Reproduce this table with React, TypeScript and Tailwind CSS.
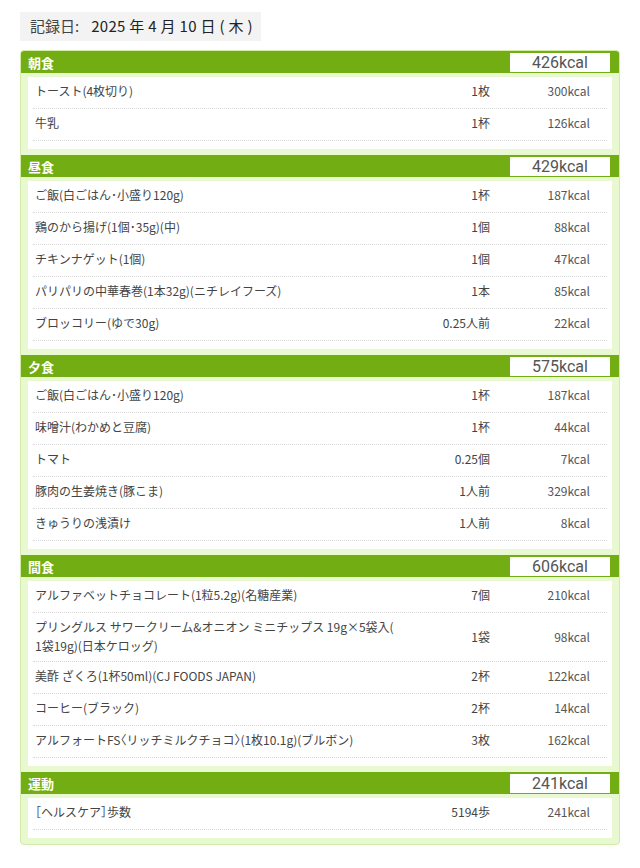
import React from 'react';

interface Item {
  name: string;
  qty: string;
  kcal: string;
}

interface Meal {
  title: string;
  total: string;
  items: Item[];
}

const meals: Meal[] = [
  {
    title: '朝食',
    total: '426kcal',
    items: [
      { name: 'トースト(4枚切り)', qty: '1枚', kcal: '300kcal' },
      { name: '牛乳', qty: '1杯', kcal: '126kcal' },
    ],
  },
  {
    title: '昼食',
    total: '429kcal',
    items: [
      { name: 'ご飯(白ごはん･小盛り120g)', qty: '1杯', kcal: '187kcal' },
      { name: '鶏のから揚げ(1個･35g)(中)', qty: '1個', kcal: '88kcal' },
      { name: 'チキンナゲット(1個)', qty: '1個', kcal: '47kcal' },
      { name: 'パリパリの中華春巻(1本32g)(ニチレイフーズ)', qty: '1本', kcal: '85kcal' },
      { name: 'ブロッコリー(ゆで30g)', qty: '0.25人前', kcal: '22kcal' },
    ],
  },
  {
    title: '夕食',
    total: '575kcal',
    items: [
      { name: 'ご飯(白ごはん･小盛り120g)', qty: '1杯', kcal: '187kcal' },
      { name: '味噌汁(わかめと豆腐)', qty: '1杯', kcal: '44kcal' },
      { name: 'トマト', qty: '0.25個', kcal: '7kcal' },
      { name: '豚肉の生姜焼き(豚こま)', qty: '1人前', kcal: '329kcal' },
      { name: 'きゅうりの浅漬け', qty: '1人前', kcal: '8kcal' },
    ],
  },
  {
    title: '間食',
    total: '606kcal',
    items: [
      { name: 'アルファベットチョコレート(1粒5.2g)(名糖産業)', qty: '7個', kcal: '210kcal' },
      {
        name: 'プリングルス サワークリーム&オニオン ミニチップス 19g×5袋入(\n1袋19g)(日本ケロッグ)',
        qty: '1袋',
        kcal: '98kcal',
      },
      { name: '美酢 ざくろ(1杯50ml)(CJ FOODS JAPAN)', qty: '2杯', kcal: '122kcal' },
      { name: 'コーヒー(ブラック)', qty: '2杯', kcal: '14kcal' },
      { name: 'アルフォートFS〈リッチミルクチョコ〉(1枚10.1g)(ブルボン)', qty: '3枚', kcal: '162kcal' },
    ],
  },
  {
    title: '運動',
    total: '241kcal',
    items: [{ name: '［ヘルスケア］歩数', qty: '5194歩', kcal: '241kcal' }],
  },
];

function MealSection({ meal }: { meal: Meal }) {
  return (
    <section>
      <div className="flex h-[22px] items-center justify-between bg-[#72ad14] pl-[7px] pr-[9px]">
        <h2 className="text-[13px] font-bold leading-none text-white">{meal.title}</h2>
        <div className="h-[19px] w-[100px] bg-white text-center text-[16px] leading-[19px] text-[#555] [font-family:Roboto,'Noto_Sans_CJK_JP',sans-serif]">
          {meal.total}
        </div>
      </div>
      <div className="mx-[7px] mb-[6px] mt-[4px] bg-white pb-[8px]">
        {meal.items.map((it, i) => {
          const multi = it.name.includes('\n');
          return (
            <div
              key={i}
              className={`mx-[5px] flex items-center border-b border-dotted border-[#d8d8d8] pt-[4px] text-[12px] leading-[19px] text-[#444] ${
                multi ? 'pb-[6px]' : 'pb-[8px]'
              }`}
            >
              <div className="w-[380px] whitespace-pre-line pl-[2px] [font-feature-settings:'halt']">
                {it.name}
              </div>
              <div className="w-[77px] text-right">{it.qty}</div>
              <div className="w-[100px] text-right text-[#555]">{it.kcal}</div>
            </div>
          );
        })}
      </div>
    </section>
  );
}

export default function App() {
  return (
    <div className="min-h-[868px] bg-white px-[20px] pt-[12px] [font-family:'Noto_Sans_CJK_JP','Noto_Sans',sans-serif]">
      <div className="inline-flex h-[29px] items-center bg-[#f3f3f3] pl-[10px] pr-[8px] text-[15px]">
        <span className="text-[#444]">記録日:</span>
        <span className="ml-[12px] tracking-[0.3px] text-[#222]">2025 年 4 月 10 日 ( 木 )</span>
      </div>
      <div className="mt-[9px] overflow-hidden rounded-[4px] border border-[#d2eca8] bg-[#e8f8d0]">
        {meals.map((m) => (
          <MealSection key={m.title} meal={m} />
        ))}
      </div>
    </div>
  );
}
